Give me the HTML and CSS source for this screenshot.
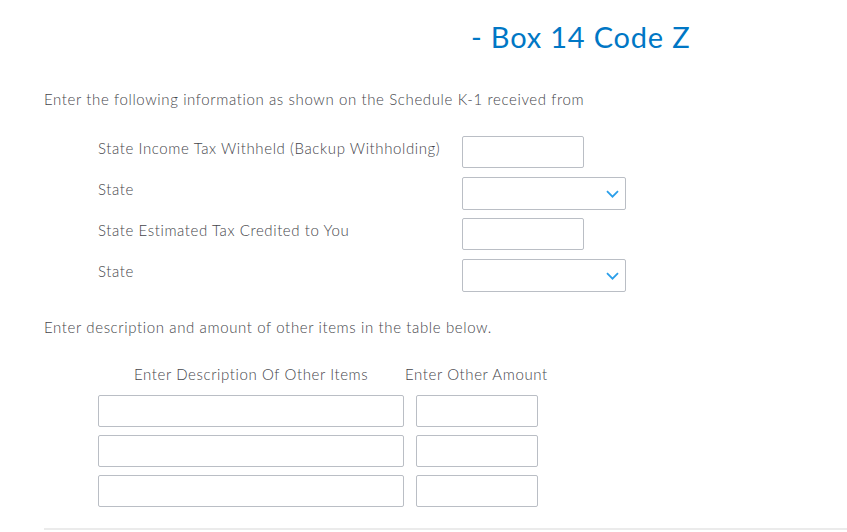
FILE: index.html
```html
<!DOCTYPE html>
<html>
<head>
<meta charset="utf-8">
<link rel="stylesheet" href="styles.css">
</head>
<body>
<div class="page">
  <h1 class="title">- Box 14 Code Z</h1>
  <p class="intro">Enter the following information as shown on the Schedule K-1 received from</p>
  <div class="fields">
    <div class="row"><span class="label">State Income Tax Withheld (Backup Withholding)</span><div class="input short"></div></div>
    <div class="row"><span class="label">State</span><div class="input select"><svg class="chev" width="13" height="8" viewBox="0 0 13 8"><path d="M1 1.2l5.5 5.5 5.5-5.5" fill="none" stroke="#2b9fea" stroke-width="1.8"/></svg></div></div>
    <div class="row"><span class="label">State Estimated Tax Credited to You</span><div class="input short"></div></div>
    <div class="row"><span class="label">State</span><div class="input select"><svg class="chev" width="13" height="8" viewBox="0 0 13 8"><path d="M1 1.2l5.5 5.5 5.5-5.5" fill="none" stroke="#2b9fea" stroke-width="1.8"/></svg></div></div>
  </div>
  <p class="intro second">Enter description and amount of other items in the table below.</p>
  <div class="table">
    <div class="thead"><span class="th desc-h">Enter Description Of Other Items</span><span class="th amt-h">Enter Other Amount</span></div>
    <div class="trow"><div class="input desc"></div><div class="input amt"></div></div>
    <div class="trow"><div class="input desc"></div><div class="input amt"></div></div>
    <div class="trow"><div class="input desc"></div><div class="input amt"></div></div>
  </div>
  <div class="rule"></div>
</div>
</body>
</html>
```
FILE: styles.css
```css
html, body { margin: 0; padding: 0; background: #fff; }
body { font-family: Lato, "Open Sans", sans-serif; color: #45464b; font-weight: 300; }
.page { padding: 0 0 0 44px; width: 803px; }
.title { margin: 0; padding: 19px 0 0 427px; font-size: 29px; line-height: 36px; font-weight: 400; color: #0077c5; letter-spacing: 0.8px; }
.intro { margin: 0; font-size: 15px; line-height: 20px; letter-spacing: 0.62px; }
.title + .intro { margin-top: 34px; }
.fields { margin-top: 27px; padding-left: 54px; display: flex; flex-direction: column; gap: 9px; }
.row { display: flex; align-items: flex-start; height: 32px; }
.label { width: 364px; font-size: 15px; line-height: 20px; padding-top: 2px; letter-spacing: 0.6px; }
.input { box-sizing: border-box; border: 1px solid #babec5; border-radius: 2px; height: 32px; background: #fff; }
.short { width: 122px; }
.select { width: 164px; height: 33px; display: flex; align-items: center; justify-content: flex-end; padding-right: 6px; }
.chev { display: block; }
.second { margin-top: 26px; }
.table { padding-left: 54px; margin-top: 27px; display: flex; flex-direction: column; gap: 8px; }
.thead { display: flex; height: 20px; font-size: 15px; line-height: 20px; letter-spacing: 0.6px; margin-bottom: 3px; }
.desc-h { padding-left: 36px; width: 271px; }
.trow { display: flex; gap: 12px; height: 32px; }
.desc { width: 306px; }
.amt { width: 122px; }
.rule { margin-top: 21px; height: 2px; background: #ebebeb; }
```
